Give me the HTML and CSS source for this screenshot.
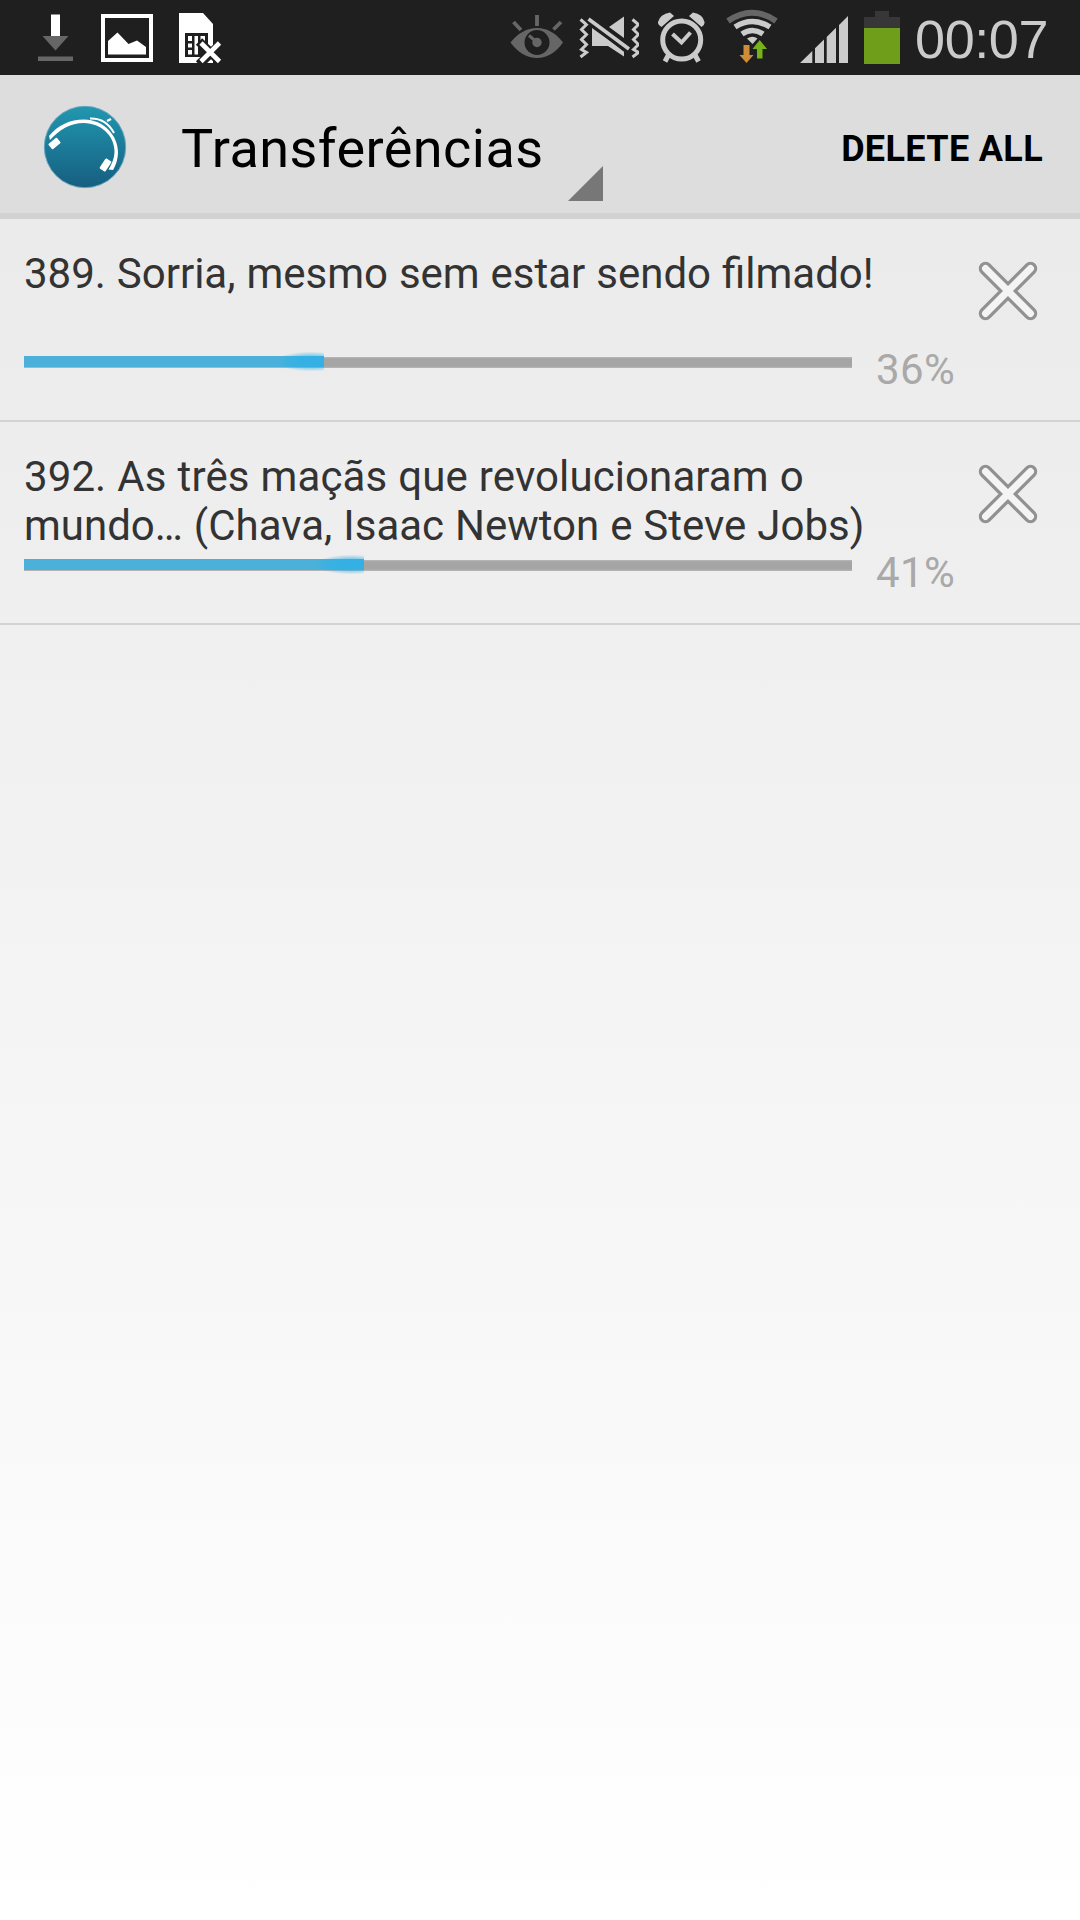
FILE: index.html
```html
<!DOCTYPE html>
<html lang="pt-BR">
<head>
<meta charset="utf-8">
<title>Transferências</title>
<link rel="stylesheet" href="styles.css">
</head>
<body>
<div class="screen">
  <header class="status">
    <div class="status-left">
      <svg width="36" height="75" viewBox="38 0 36 75"><path fill="#fff" d="M51 14.5h9V36h-9z"/><path fill="#666" d="M42.5 36h26L55.5 50.5zM38 56.5h35V61H38z"/></svg>
      <svg width="52" height="75" viewBox="101 0 52 75"><path fill="none" stroke="#fff" stroke-width="4" d="M103 16h48v44h-48z"/><path fill="#fff" d="M108 41l9.500-8.500 11 11.500 8.500-3.500 9 6.500v7.500h-38z"/></svg>
      <svg width="44" height="75" viewBox="178 0 44 75"><path fill="#fff" d="M179 13h24l10 11v39h-34z"/><path fill="#1f1f1f" d="M185 33h23v24h-23z"/><path fill="#fff" d="M188 36h4v5h-4zM188 43.500h4v4h-4zM188 50h4v4.500h-4zM194.500 36h3.500v18.500h-3.500zM200.500 36h4.500v5h-4.500z"/><path stroke="#1f1f1f" stroke-width="9" d="M199 41.500l24 23M199 64.500l24-23"/><path stroke="#fff" stroke-width="4.600" d="M201 43L219.500 61.500M201 61.500L219.500 43"/></svg>
    </div>
    <div class="status-right">
      <svg class="eye" width="54" height="75" viewBox="510 0 54 75"><path fill="#666" d="M510.500 42.500Q522 28 537 28T563 42.500Q552 58 537 58T510.500 42.500z"/><circle cx="537" cy="42.500" r="12.500" fill="#1f1f1f"/><circle cx="537" cy="42.500" r="4.700" fill="#666"/><path stroke="#666" stroke-width="3" d="M529 35.500l7 6"/><path stroke="#666" stroke-width="3.800" d="M537 15v11M513.500 22l7.500 8M561 22l-7.500 7.500"/></svg>
      <svg class="mute" width="60" height="75" viewBox="579 0 60 75"><path fill="none" stroke="#cbcbcb" stroke-width="3" d="M580.500 19.500l6 5-5 5 5 5-5 5 5 5-5 5 5 3-6 4.500M632.500 19.500l6 5-5 5 5 5-5 5 5 5-5 5 5 3-6 4.500"/><path fill="#cbcbcb" d="M592 28l32 23v5.500L608 46h-16zM609 27l15-10.500V38z"/><path stroke="#1f1f1f" stroke-width="8" d="M589 19.500l40 31"/><path stroke="#cbcbcb" stroke-width="3.600" d="M588.500 19L629 49"/></svg>
      <svg class="alarm" width="48" height="75" viewBox="658 0 48 75"><g fill="none" stroke="#cbcbcb"><circle cx="681.700" cy="40" r="19" stroke-width="5"/><path stroke-width="4" d="M672.500 34l9 8.500 9-10"/><path stroke-width="5" d="M669 54l-4 7.500M694.500 54l4 7.500"/></g><path fill="#cbcbcb" d="M658 22Q660 14 670 12.500L674 16 661.500 27Q657.500 25 658 22zM704.500 22Q703 14 693 12.500L689 16 701.500 27Q705 25 704.500 22z"/></svg>
      <svg class="wifi" width="54" height="75" viewBox="726 0 54 75"><g fill="none"><path stroke="#666" stroke-width="6" d="M728 21Q752 4.500 776 21"/><path stroke="#cbcbcb" stroke-width="5.500" d="M735 27Q752.500 16 770 27M742 34Q752.500 27 763 34"/></g><path fill="#cbcbcb" d="M747 38.500Q752.500 35 757.500 38.500L752.500 44z"/><path fill="#d08d38" d="M743.500 45h6v10h4L746.500 63 739.500 55h4z"/><path fill="#75b21b" d="M757 58.500h5.500V49h4.500L759.700 40 752.500 49h4.500z"/></svg>
      <svg class="signal" width="48" height="75" viewBox="800 0 48 75"><path fill="#cbcbcb" d="M800 63l12.300-12v12zM815 63V48.300l9-8.800V63zM826.700 63V37l9.300-9.200V63zM839 63V25l9-9v47z"/></svg>
      <svg class="battery" width="36" height="75" viewBox="864 0 36 75"><path fill="#373737" d="M875 11h14v6h11v11h-36V17h11z"/><path fill="#6f9f1a" d="M864 28h36v36h-36z"/></svg>
      <span class="clock">00:07</span>
    </div>
  </header>
  <nav class="bar">
    <svg class="logo" width="84" height="84" viewBox="43 105 84 84">
      <defs><linearGradient id="sea" x1="0" y1="0" x2="0" y2="1"><stop offset="0" stop-color="#2197b0"/><stop offset="1" stop-color="#165e80"/></linearGradient></defs>
      <circle cx="85" cy="147" r="40.700" fill="url(#sea)" stroke="#68a5bd" stroke-width="1"/>
      <path fill="#fff" d="M49 136C58 125 70 119.500 84 119.500C104 119.500 118 136 118 152C118 160 115 167 113 170L108.500 169.500C112 164 114.500 158 114.500 151C114 135 101 123.500 84 123C70 123 59 130 50 140z"/>
      <path fill="none" stroke="#fff" stroke-width="2" d="M90 118.500Q106 118 114 133"/><path stroke="#fff" stroke-width="2.500" d="M107 121l4-2"/>
      <g fill="#fff"><rect x="-5.500" y="-3.500" width="11" height="7" rx="1" transform="translate(54.500 143.500) rotate(-40)"/><rect x="-6" y="-3.500" width="12" height="7" rx="1" transform="translate(105.500 165) rotate(-57)"/></g>
    </svg>
    <h1 class="title">Transferências</h1>
    <svg class="spinner" width="37" height="37" viewBox="0 0 37 37"><path fill="#777" d="M36 1v35H1z"/></svg>
    <button class="delete">DELETE ALL</button>
  </nav>
  <main>
    <section class="row">
      <div class="info">
        <p class="name">389. Sorria, mesmo sem estar sendo filmado!</p>
        <div class="progress"><div class="track"><div class="fill" style="width:300px"></div></div><span class="percent">36%</span></div>
      </div>
      <svg class="close" width="64" height="64" viewBox="-32 -32 64 64"><g stroke-linecap="round"><path stroke="#919191" stroke-width="13.500" d="M-22.500-22.500l45 45M-22.500 22.500l45-45"/><path stroke="#f4f4f4" stroke-width="7" d="M-22.500-22.500l45 45M-22.500 22.500l45-45"/></g></svg>
    </section>
    <section class="row">
      <div class="info">
        <p class="name"><span class="wide">392. As três maçãs que revolucionaram o</span><br>mundo… (Chava, Isaac Newton e Steve Jobs)</p>
        <div class="progress"><div class="track"><div class="fill" style="width:340px"></div></div><span class="percent">41%</span></div>
      </div>
      <svg class="close" width="64" height="64" viewBox="-32 -32 64 64"><g stroke-linecap="round"><path stroke="#919191" stroke-width="13.500" d="M-22.500-22.500l45 45M-22.500 22.500l45-45"/><path stroke="#f4f4f4" stroke-width="7" d="M-22.500-22.500l45 45M-22.500 22.500l45-45"/></g></svg>
    </section>
  </main>
</div>
</body>
</html>
```
FILE: styles.css
```css
* { box-sizing: border-box; margin: 0; padding: 0; }
body { font-family: Roboto, sans-serif; }
svg { display: block; flex: none; }
.screen {
  width: 1080px;
  height: 1920px;
  overflow: hidden;
  background: linear-gradient(#e8e8e8, #fff);
}
.status {
  display: flex;
  justify-content: space-between;
  height: 75px;
  padding: 0 31px 0 38px;
  background: #1f1f1f;
}
.status-left { display: flex; gap: 26px; }
.status-left svg:first-child { margin-right: 1px; }
.status-left svg:last-child { margin-left: -1px; }
.status-right { display: flex; }
.eye { margin-right: 15px; }
.mute { margin-right: 19px; }
.alarm { margin-right: 20px; }
.wifi { margin-right: 20px; }
.signal { margin-right: 16px; }
.battery { margin-right: 15px; }
.clock {
  width: 134px;
  font: 54px/79px "Liberation Sans", sans-serif;
  letter-spacing: -0.4px;
  color: #cbcbcb;
  white-space: nowrap;
}
.bar {
  display: flex;
  align-items: center;
  height: 144px;
  padding: 6px 0 0 43px;
  background: #ddd;
  border-bottom: 6px solid #d2d2d2;
}
.title {
  width: 385px;
  margin-left: 54px;
  padding-top: 4px;
  font-size: 54px;
  font-weight: 400;
  line-height: 64px;
  letter-spacing: 0.45px;
  white-space: nowrap;
  color: #000;
}
.spinner { align-self: flex-end; margin: 0 0 11px 1px; }
.delete {
  margin-left: auto;
  margin-right: 37px;
  padding-top: 3px;
  border: 0;
  background: none;
  font: 700 36px/42px Roboto, sans-serif;
  letter-spacing: 0.35px;
  color: #000;
  white-space: nowrap;
}
.row {
  display: flex;
  justify-content: space-between;
  height: 203px;
  padding: 30px 40px 0 24px;
  border-bottom: 2px solid #d3d3d3;
}
.info { width: 935px; }
.name {
  height: 96px;
  font-size: 42px;
  line-height: 49px;
  word-spacing: 0.5px;
  white-space: nowrap;
  color: #333;
}
.wide { letter-spacing: 0.1px; }
.progress { display: flex; gap: 24px; }
.track {
  width: 828px;
  height: 11px;
  margin-top: 12px;
  background: linear-gradient(#b8b8b8, #a5a5a5 2px, #a5a5a5 9px, #b8b8b8);
}
.fill {
  position: relative;
  height: 11px;
  top: -1px;
  background: linear-gradient(90deg, #4bb1da 85%, #35b0e4 95%);
}
/* glow around the leading end of the progress line */
.fill::after {
  content: "";
  position: absolute;
  right: 0;
  top: -4px;
  width: 44px;
  height: 19px;
  background: radial-gradient(ellipse 36px 10px at 70% 50%, #35b0e4 25%, rgba(53, 176, 228, 0));
}
.percent { font-size: 42px; line-height: 49px; letter-spacing: 0.4px; color: #a9a9a9; }
.close { margin-top: 10px; }
```
